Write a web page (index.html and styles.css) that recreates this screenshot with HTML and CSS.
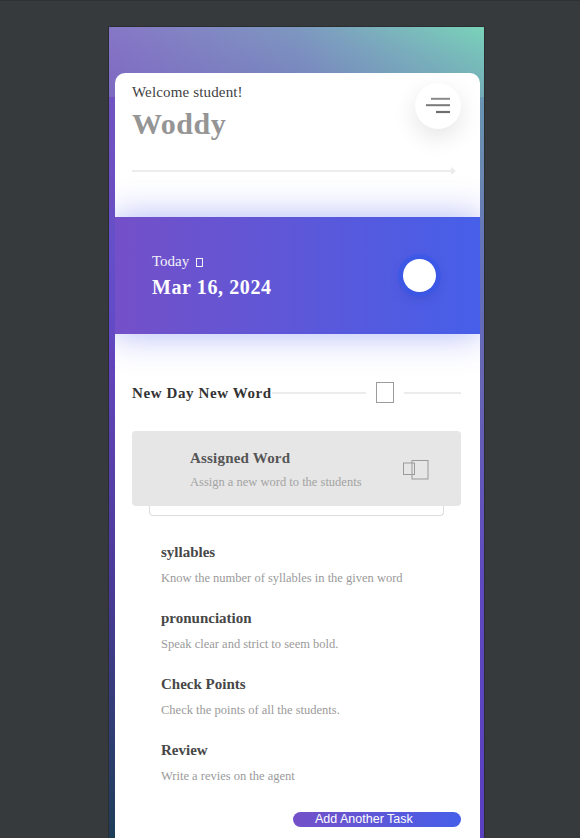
FILE: index.html
```html
<!DOCTYPE html>
<html lang="en">
<head>
<meta charset="utf-8">
<title>Woddy</title>
<link rel="stylesheet" href="styles.css">
</head>
<body>
<div class="frame">
  <div class="card">
    <header class="head">
      <div class="greet">
        <p class="welcome">Welcome student!</p>
        <h1 class="name">Woddy</h1>
      </div>
      <button class="menu" aria-label="Menu">
        <svg width="46" height="46" viewBox="0 0 46 46">
          <line x1="16" y1="15.8" x2="35" y2="15.8" stroke="#8a8a8a" stroke-width="2"/>
          <line x1="11" y1="22.2" x2="35" y2="22.2" stroke="#7a7a7a" stroke-width="2"/>
          <line x1="21" y1="29" x2="35" y2="29" stroke="#6e6e6e" stroke-width="2.2"/>
        </svg>
      </button>
    </header>
    <div class="arrow"><span class="shaft"></span><span class="tip"></span></div>
    <section class="banner">
      <div class="date">
        <p class="today">Today<span class="tofu"></span></p>
        <p class="day">Mar 16, 2024</p>
      </div>
      <span class="dot"></span>
    </section>
    <div class="content">
      <div class="section-row">
        <h2 class="section-title">New Day New Word</h2>
        <span class="rule"></span>
        <span class="box"></span>
        <span class="rule short"></span>
      </div>
      <div class="assign">
        <div class="assign-text">
          <p class="assign-title">Assigned Word</p>
          <p class="assign-desc">Assign a new word to the students</p>
        </div>
        <svg class="copy" width="27" height="20" viewBox="0 0 27 20">
          <rect x="0.5" y="3" width="11" height="11.5" fill="none" stroke="#9a9a9a" stroke-width="1"/>
          <rect x="9" y="0.5" width="16" height="18.5" fill="none" stroke="#9a9a9a" stroke-width="1"/>
        </svg>
      </div>
      <div class="stack"></div>
      <ul class="tasks">
        <li class="task">
          <p class="task-title">syllables</p>
          <p class="task-desc">Know the number of syllables in the given word</p>
        </li>
        <li class="task">
          <p class="task-title">pronunciation</p>
          <p class="task-desc">Speak clear and strict to seem bold.</p>
        </li>
        <li class="task">
          <p class="task-title">Check Points</p>
          <p class="task-desc">Check the points of all the students.</p>
        </li>
        <li class="task">
          <p class="task-title">Review</p>
          <p class="task-desc">Write a revies on the agent</p>
        </li>
      </ul>
      <div class="actions">
        <button class="add">Add Another Task</button>
      </div>
    </div>
  </div>
</div>
</body>
</html>
```
FILE: styles.css
```css
html, body {
  margin: 0;
  padding: 0;
  height: 100%;
  overflow: hidden;
}
body {
  background: #363a3d;
  border-top: 1px solid #2d3134;
  font-family: "Liberation Serif", "Times New Roman", serif;
}
p, h1, h2 { margin: 0; }

.frame {
  margin: 25px 0 0 108px;
  width: 375px;
  min-height: 900px;
  overflow: hidden;
  border: 1px solid #2b2e31;
  border-bottom: 0;
  padding-top: 46px;
  background:
    linear-gradient(to bottom, rgba(112, 72, 190, 0) 0, rgba(112, 72, 190, 0.12) 25px, rgba(100, 70, 180, 0.28) 70px) top / 100% 70px no-repeat,
    linear-gradient(to right, #8677c6 0%, #7d98c0 50%, #79d3b9 100%) top / 100% 70px no-repeat,
    linear-gradient(to bottom, #7458c3 0, #6747c0 300px, #4a3b98 560px, #1c3e55 820px) left / 50% 100% no-repeat,
    linear-gradient(to bottom, #6aa3b4 0, #6a72b0 260px, #5f48c0 560px, #5a3fc0 820px) right / 50% 100% no-repeat;
}

.card {
  margin-left: 6px;
  width: 365px;
  background: #fff;
  border-radius: 10px 10px 0 0;
  padding-bottom: 30px;
}

.head {
  display: flex;
  justify-content: space-between;
  align-items: flex-start;
  padding: 10px 19px 0 17px;
}
.welcome {
  font-size: 15px;
  line-height: 18px;
  color: #3f3f3f;
  letter-spacing: 0.15px;
}
.name {
  margin-top: 5px;
  font-size: 30px;
  line-height: 36px;
  font-weight: bold;
  color: #959595;
  letter-spacing: 0.5px;
}
.menu {
  width: 46px;
  height: 46px;
  padding: 0;
  border: 0;
  border-radius: 50%;
  background: #fff;
  box-shadow: 0 8px 24px rgba(0, 0, 0, 0.11);
  display: flex;
}

.arrow {
  display: flex;
  align-items: center;
  margin: 24px 24px 0 17px;
  height: 9px;
}
.shaft {
  flex: 1;
  height: 2px;
  background: #ececec;
}
.tip {
  width: 0;
  height: 0;
  border-left: 5px solid #ececec;
  border-top: 4.5px solid transparent;
  border-bottom: 4.5px solid transparent;
}

.banner {
  position: relative;
  margin-top: 42px;
  height: 117px;
  padding: 0 44px 0 37px;
  display: flex;
  align-items: center;
  justify-content: space-between;
  background: linear-gradient(to right, #7450c8, #465fe9);
  box-shadow: 0 0 32px 2px rgba(78, 96, 236, 0.42);
}
.today {
  font-size: 15px;
  line-height: 18px;
  color: #f2f2f8;
}
.tofu {
  display: inline-block;
  width: 5px;
  height: 7px;
  border: 1px solid #f2f2f8;
  margin-left: 7px;
  vertical-align: -1px;
}
.day {
  margin-top: 5px;
  font-size: 20px;
  line-height: 24px;
  font-weight: bold;
  letter-spacing: 0.6px;
  color: #fff;
}
.dot {
  width: 33px;
  height: 33px;
  border-radius: 50%;
  background: #fff;
  box-shadow: 0 0 0 5px rgba(58, 88, 232, 0.75), 0 4px 12px rgba(30, 40, 150, 0.35);
}

.content {
  padding: 0 19px 0 17px;
}
.section-row {
  margin-top: 48px;
  display: flex;
  align-items: center;
  height: 21px;
}
.section-title {
  font-size: 15px;
  line-height: 18px;
  font-weight: bold;
  color: #333;
  letter-spacing: 0.6px;
  white-space: nowrap;
}
.rule {
  flex: 1;
  height: 2px;
  background: #ececec;
}
.rule.short {
  flex: 0 0 57px;
}
.box {
  box-sizing: border-box;
  width: 18px;
  height: 21px;
  margin: 0 10px;
  border: 1px solid #9c9c9c;
}

.assign {
  margin-top: 28px;
  height: 75px;
  box-sizing: border-box;
  padding: 0 31px 0 58px;
  display: flex;
  align-items: center;
  justify-content: space-between;
  background: #e6e6e6;
  border-radius: 4px;
}
.assign-title {
  font-size: 15px;
  line-height: 18px;
  font-weight: bold;
  color: #555;
  letter-spacing: 0.2px;
}
.assign-desc {
  margin-top: 8px;
  font-size: 12.5px;
  line-height: 14px;
  color: #a3a3a3;
}
.copy {
  margin-top: 2px;
}

.stack {
  margin: 0 17px;
  height: 9px;
  border: 1px solid #dddddd;
  border-top: 0;
  border-radius: 0 0 4px 4px;
}

.tasks {
  list-style: none;
  margin: 26px 0 0;
  padding: 0 0 0 29px;
}
.task + .task {
  margin-top: 22px;
}
.task-title {
  font-size: 15px;
  line-height: 20px;
  font-weight: bold;
  color: #474747;
}
.task-desc {
  margin-top: 8px;
  font-size: 12.5px;
  line-height: 16px;
  color: #9a9a9a;
}

.actions {
  margin-top: 28px;
  display: flex;
  justify-content: flex-end;
}
.add {
  width: 168px;
  height: 15px;
  padding: 0 0 0 22px;
  border: 0;
  border-radius: 8px;
  text-align: left;
  font-family: "Liberation Sans", Arial, sans-serif;
  font-size: 12.5px;
  line-height: 15px;
  color: #fff;
  background: linear-gradient(to right, #7450c8, #465fe9);
}
```
